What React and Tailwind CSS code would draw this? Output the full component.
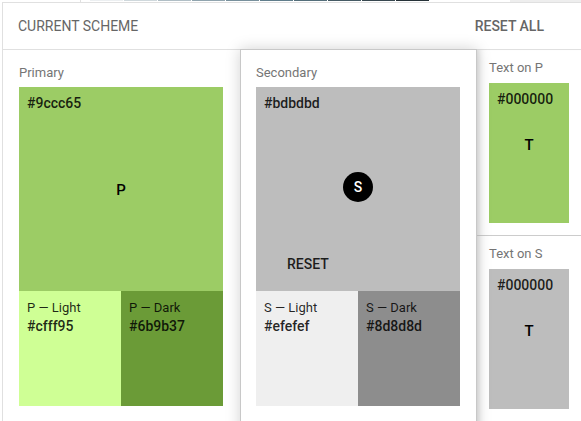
import React from 'react';

const strip = ['#eceff1', '#cfd8dc', '#b0bec5', '#90a4ae', '#78909c', '#607d8b', '#546e7a', '#455a64', '#37474f', '#263238'];

const Shade = ({ label, hex, bg }) => (
  <div className={`flex-1 h-full px-2 pt-[7px] leading-[19px] text-[13px] text-black/85 ${bg}`}>
    <div>{label}</div>
    <div className="font-medium text-[14px]">{hex}</div>
  </div>
);

const TextSwatch = ({ title, bg }) => (
  <div>
    <div className="h-4 leading-4 text-[13px] text-[#757575] mb-[7px]">{title}</div>
    <div className={`w-[80px] h-[140px] flex flex-col ${bg}`}>
      <div className="px-2 pt-[7px] leading-[19px] text-[14px] font-medium text-black/85">#000000</div>
      <div className="flex-1 flex items-start justify-center pt-[25px] text-[15px] font-medium text-black">T</div>
    </div>
  </div>
);

export default function App() {
  return (
    <div className="w-[581px] h-[421px] overflow-hidden bg-white font-['Roboto',sans-serif]">
      {/* palette strip */}
      <div className="h-[2px] flex">
        <div className="w-[81px] h-full border-r border-[#e0e0e0]" />
        <div className="ml-[9px] flex gap-px">
          {strip.map((c) => (
            <div key={c} className="w-[33px] h-px" style={{ backgroundColor: c }} />
          ))}
        </div>
        <div className="ml-auto w-[71px] h-full bg-[#eeeeee]" />
      </div>

      <div className="ml-[2px] border-l border-t border-[#e0e0e0] w-[700px]">
        {/* header */}
        <div className="h-[47px] border-b border-[#e0e0e0] flex items-center pl-[15px] w-[579px] justify-between pr-[38px]">
          <span className="text-[14px] uppercase text-[#666666]">Current scheme</span>
          <span className="text-[14px] font-medium uppercase text-[#666666]">Reset all</span>
        </div>

        <div className="flex">
          {/* primary */}
          <div className="w-[237px] pl-4 pt-[15px]">
            <div className="h-4 leading-4 text-[13px] text-[#757575] mb-[6px]">Primary</div>
            <div className="w-[204px] h-[204px] bg-[#9ccc65] flex flex-col">
              <div className="px-2 pt-[7px] leading-[19px] text-[14px] font-medium text-black/85">#9ccc65</div>
              <div className="flex-1 flex items-center justify-center pb-[24px] text-[15px] font-medium text-black">P</div>
            </div>
            <div className="w-[204px] h-[115px] flex">
              <Shade label="P — Light" hex="#cfff95" bg="bg-[#cfff95]" />
              <Shade label="P — Dark" hex="#6b9b37" bg="bg-[#6b9b37]" />
            </div>
          </div>

          {/* secondary, raised */}
          <div className="relative z-10 -mt-px w-[237px] h-[400px] bg-white border border-[#c8c8c8] shadow-[0_0_14px_rgba(0,0,0,0.18)] pl-[15px] pt-[15px]">
            <div className="h-4 leading-4 text-[13px] text-[#757575] mb-[6px]">Secondary</div>
            <div className="w-[204px] h-[204px] bg-[#bdbdbd] flex flex-col">
              <div className="px-2 pt-[7px] leading-[19px] text-[14px] font-medium text-black/85">#bdbdbd</div>
              <div className="flex-1 flex items-start justify-center pt-[59px]">
                <div className="w-[30px] h-[30px] rounded-full bg-black text-white flex items-center justify-center text-[14px] font-medium">S</div>
              </div>
              <div className="pl-[31px] pb-[19px] leading-4 text-[14px] font-medium uppercase text-black/85">Reset</div>
            </div>
            <div className="w-[204px] h-[115px] flex">
              <Shade label="S — Light" hex="#efefef" bg="bg-[#efefef]" />
              <Shade label="S — Dark" hex="#8d8d8d" bg="bg-[#8d8d8d]" />
            </div>
          </div>

          {/* text colours */}
          <div className="w-[105px] shadow-[inset_7px_0_7px_-6px_rgba(0,0,0,0.15)]">
            <div className="pl-[12px] pt-[10px] pb-[12px] border-b border-[#cccccc]">
              <TextSwatch title="Text on P" bg="bg-[#9ccc65]" />
            </div>
            <div className="pl-[12px] pt-[10px]">
              <TextSwatch title="Text on S" bg="bg-[#bdbdbd]" />
            </div>
          </div>
        </div>
      </div>
    </div>
  );
}
